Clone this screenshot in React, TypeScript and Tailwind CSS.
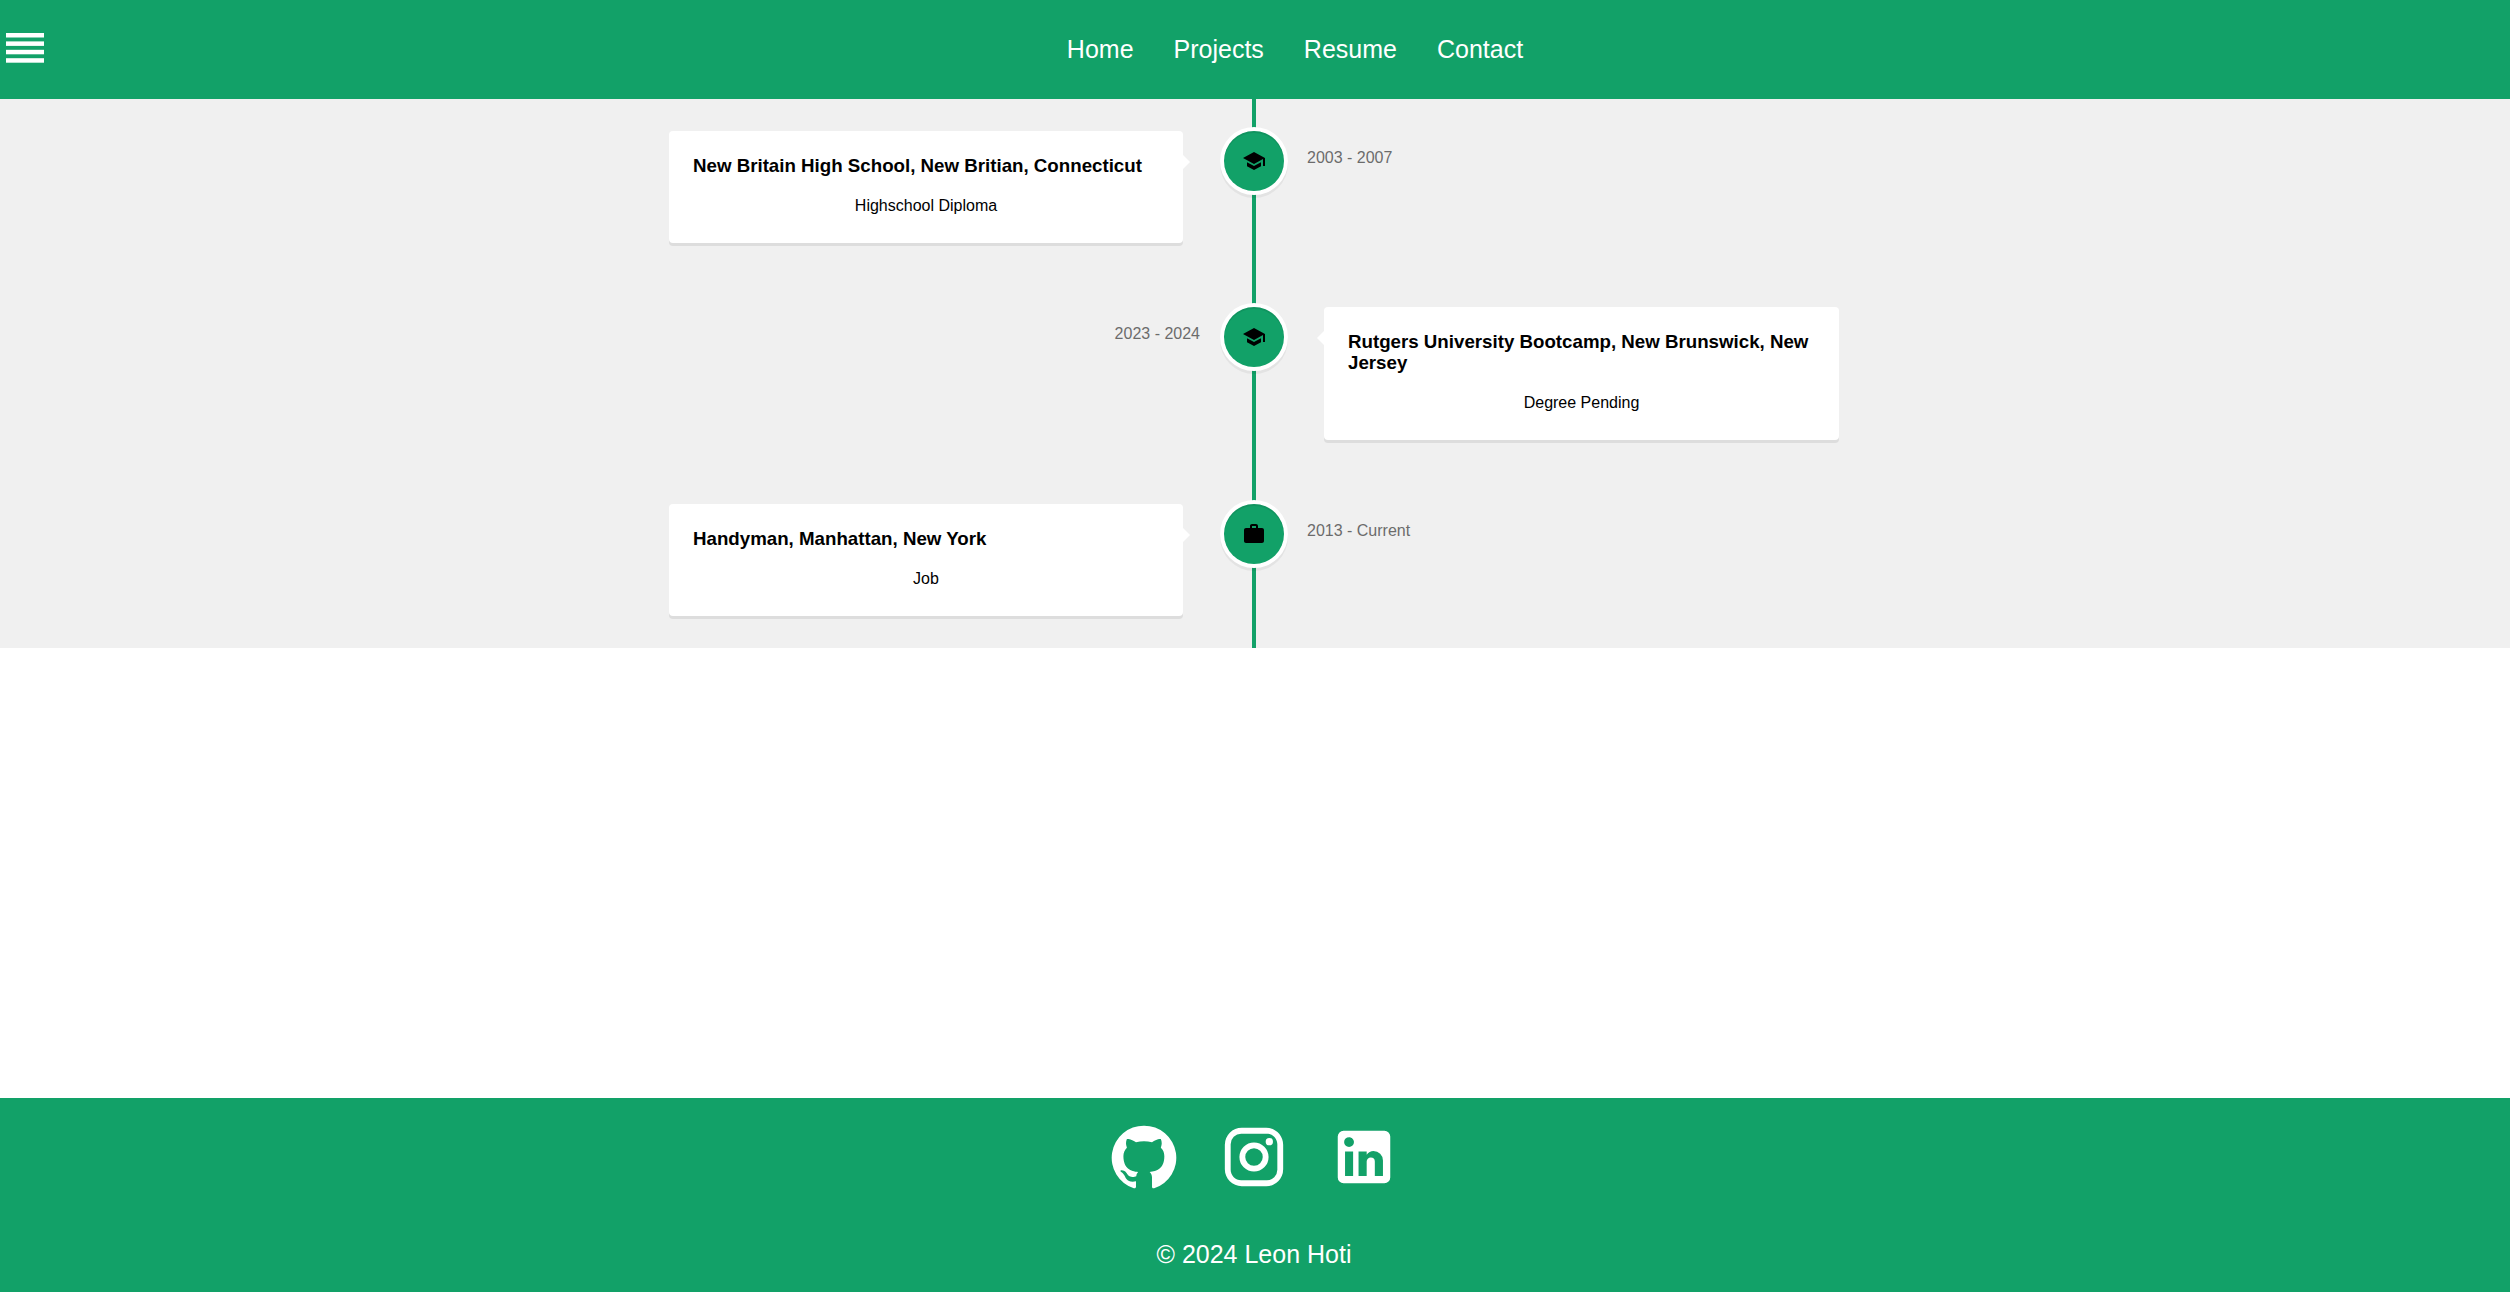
import React from "react";

const schoolPath = "M5 13.18v4L12 21l7-3.82v-4L12 17l-7-3.82zM12 3 1 9l11 6 9-4.91V17h2V9L12 3z";
const workPath =
  "M20 6h-4V4c0-1.11-.89-2-2-2h-4c-1.11 0-2 .89-2 2v2H4c-1.11 0-1.99.89-1.99 2L2 19c0 1.11.89 2 2 2h16c1.11 0 2-.89 2-2V8c0-1.11-.89-2-2-2zm-6 0h-4V4h4v2z";
const githubPath =
  "M12 1.27a11 11 0 00-3.48 21.46c.55.09.73-.28.73-.55v-1.84c-3.03.64-3.67-1.46-3.67-1.46-.55-1.29-1.28-1.65-1.28-1.65-.92-.65.1-.65.1-.65 1.1 0 1.73 1.1 1.73 1.1.92 1.65 2.57 1.2 3.21.92a2 2 0 01.64-1.47c-2.47-.27-5.04-1.19-5.04-5.5 0-1.1.46-2.1 1.2-2.84a3.76 3.76 0 010-2.93s.91-.28 3.11 1.1c1.8-.49 3.7-.49 5.5 0 2.1-1.38 3.02-1.1 3.02-1.1a3.76 3.76 0 010 2.93c.83.74 1.2 1.74 1.2 2.94 0 4.21-2.57 5.13-5.04 5.4.45.37.82.92.82 2.02v3.03c0 .27.1.64.73.55A11 11 0 0012 1.27";
const instagramPath =
  "M7.8 2h8.4C19.4 2 22 4.6 22 7.8v8.4a5.8 5.8 0 0 1-5.8 5.8H7.8C4.6 22 2 19.4 2 16.2V7.8A5.8 5.8 0 0 1 7.8 2m-.2 2A3.6 3.6 0 0 0 4 7.6v8.8C4 18.39 5.61 20 7.6 20h8.8a3.6 3.6 0 0 0 3.6-3.6V7.6C20 5.61 18.39 4 16.4 4H7.6m9.65 1.5a1.25 1.25 0 0 1 1.25 1.25A1.25 1.25 0 0 1 17.25 8 1.25 1.25 0 0 1 16 6.75a1.25 1.25 0 0 1 1.25-1.25M12 7a5 5 0 0 1 5 5 5 5 0 0 1-5 5 5 5 0 0 1-5-5 5 5 0 0 1 5-5m0 2a3 3 0 0 0-3 3 3 3 0 0 0 3 3 3 3 0 0 0 3-3 3 3 0 0 0-3-3z";
const linkedinPath =
  "M19 3a2 2 0 0 1 2 2v14a2 2 0 0 1-2 2H5a2 2 0 0 1-2-2V5a2 2 0 0 1 2-2h14m-.5 15.5v-5.3a3.26 3.26 0 0 0-3.26-3.26c-.85 0-1.84.52-2.32 1.3v-1.11h-2.79v8.37h2.79v-4.93c0-.77.62-1.4 1.39-1.4a1.4 1.4 0 0 1 1.4 1.4v4.93h2.79M6.88 8.56a1.68 1.68 0 0 0 1.68-1.68c0-.93-.75-1.69-1.68-1.69a1.69 1.69 0 0 0-1.69 1.69c0 .93.76 1.68 1.69 1.68m1.39 9.94v-8.37H5.5v8.37h2.77z";

const Icon: React.FC<{ d: string; className: string }> = ({ d, className }) => (
  <svg viewBox="0 0 24 24" fill="currentColor" className={className}>
    <path d={d} />
  </svg>
);

type Entry = { title: string; subtitle: string; date: string; icon: string; side: "left" | "right" };

const entries: Entry[] = [
  {
    title: "New Britain High School, New Britian, Connecticut",
    subtitle: "Highschool Diploma",
    date: "2003 - 2007",
    icon: schoolPath,
    side: "left",
  },
  {
    title: "Rutgers University Bootcamp, New Brunswick, New Jersey",
    subtitle: "Degree Pending",
    date: "2023 - 2024",
    icon: schoolPath,
    side: "right",
  },
  {
    title: "Handyman, Manhattan, New York",
    subtitle: "Job",
    date: "2013 - Current",
    icon: workPath,
    side: "left",
  },
];

const Card: React.FC<{ entry: Entry }> = ({ entry }) => (
  <div
    className={
      entry.side === "left"
        ? "relative w-[514px] rounded bg-white p-6 shadow-[0_3px_0_#ddd]"
        : "relative w-[515px] rounded bg-white p-6 shadow-[0_3px_0_#ddd]"
    }
  >
    {entry.side === "left" ? (
      <span className="absolute top-6 left-full border-[7px] border-transparent border-l-white" />
    ) : (
      <span className="absolute top-6 right-full border-[7px] border-transparent border-r-white" />
    )}
    <h3 className="text-[18.72px] leading-[21.6px] font-bold text-black">{entry.title}</h3>
    <p className="mt-4 text-center text-base leading-[26.4px] text-black">{entry.subtitle}</p>
  </div>
);

const TimelineRow: React.FC<{ entry: Entry }> = ({ entry }) => (
  <div className="relative flex">
    <div className="flex w-1/2 justify-start">
      {entry.side === "left" ? (
        <Card entry={entry} />
      ) : (
        <span className="ml-auto mt-[15px] pr-[54px] text-base leading-6 text-[#333] opacity-70">{entry.date}</span>
      )}
    </div>
    <div className="flex w-1/2 justify-end">
      {entry.side === "right" ? (
        <Card entry={entry} />
      ) : (
        <span className="mr-auto mt-[15px] pl-[53px] text-base leading-6 text-[#333] opacity-70">{entry.date}</span>
      )}
    </div>
    <div className="absolute top-0 left-1/2 -ml-[30px] flex h-[60px] w-[60px] items-center justify-center rounded-full bg-[#12a168] text-black shadow-[0_0_0_4px_#fff,inset_0_2px_0_rgba(0,0,0,0.08),0_3px_0_4px_rgba(0,0,0,0.05)]">
      <Icon d={entry.icon} className="h-6 w-6" />
    </div>
  </div>
);

export default function App() {
  return (
    <div className="flex min-h-[1292px] flex-col bg-white font-['Liberation_Sans',Arial,sans-serif]">
      <header className="flex h-[99px] items-center bg-[#12a168] text-white">
        <div className="mb-[3px] w-20 shrink-0 pl-[6px]">
          <svg viewBox="0 0 38 30" className="h-[30px] w-[38px]" fill="currentColor">
            <rect x="0" y="0" width="38" height="4.5" />
            <rect x="0" y="8.4" width="38" height="4.5" />
            <rect x="0" y="16.8" width="38" height="4.5" />
            <rect x="0" y="25.2" width="38" height="4.5" />
          </svg>
        </div>
        <nav className="flex flex-1 justify-center gap-10 text-[25px]">
          <a>Home</a>
          <a>Projects</a>
          <a>Resume</a>
          <a>Contact</a>
        </nav>
      </header>

      <section className="bg-[#f0f0f0] py-8 pr-[2px]">
        <div className="relative mx-auto flex w-[1170px] flex-col gap-[63.7px]">
          <div className="absolute -top-8 -bottom-8 left-1/2 -ml-[2px] w-1 bg-[#12a168]" />
          {entries.map((entry) => (
            <TimelineRow key={entry.title} entry={entry} />
          ))}
        </div>
      </section>

      <footer className="mt-auto flex h-[194px] flex-col items-center bg-[#12a168] pt-6 pr-[2px] text-white">
        <div className="flex gap-10">
          <Icon d={githubPath} className="h-[70px] w-[70px]" />
          <Icon d={instagramPath} className="h-[70px] w-[70px]" />
          <Icon d={linkedinPath} className="h-[70px] w-[70px]" />
        </div>
        <p className="mt-[42px] text-[25px] leading-[40px]">© 2024 Leon Hoti</p>
      </footer>
    </div>
  );
}
